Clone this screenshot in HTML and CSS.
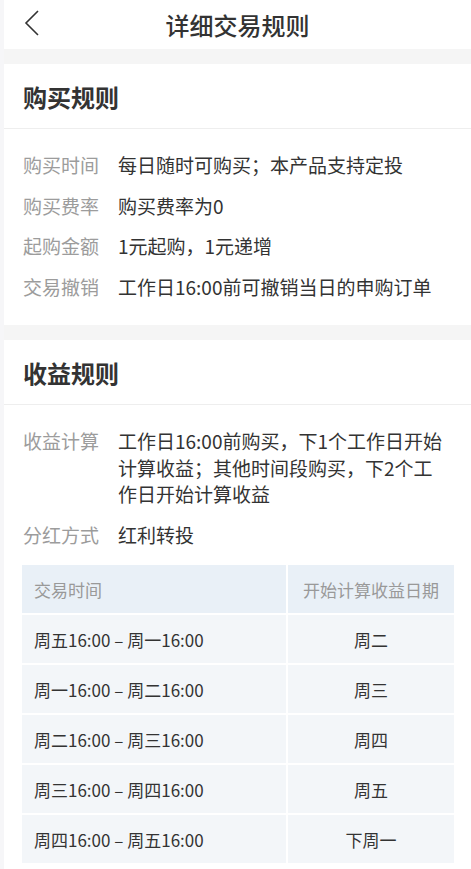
FILE: index.html
```html
<!DOCTYPE html>
<html lang="zh-CN">
<head>
<meta charset="UTF-8">
<meta name="viewport" content="width=device-width, initial-scale=1.0">
<title>详细交易规则</title>
<link rel="stylesheet" href="styles.css">
</head>
<body>
    <div class="page">
        <div class="top-bar">
            <svg class="back" width="16" height="26" viewBox="0 0 16 26">
                <path d="M14 1 L2 13 L14 25" fill="none" stroke="#333" stroke-width="1.6"/>
            </svg>
            <div class="title">详细交易规则</div>
        </div>

        <div class="band"></div>

        <div class="section">
            <div class="section-head">购买规则</div>
            <div class="section-body">
                <div class="rule-row">
                    <div class="label">购买时间</div>
                    <div class="value">每日随时可购买；本产品支持定投</div>
                </div>
                <div class="rule-row">
                    <div class="label">购买费率</div>
                    <div class="value">购买费率为0</div>
                </div>
                <div class="rule-row">
                    <div class="label">起购金额</div>
                    <div class="value">1元起购，1元递增</div>
                </div>
                <div class="rule-row">
                    <div class="label">交易撤销</div>
                    <div class="value">工作日16:00前可撤销当日的申购订单</div>
                </div>
            </div>
        </div>

        <div class="band"></div>

        <div class="section">
            <div class="section-head">收益规则</div>
            <div class="section-body">
                <div class="rule-row">
                    <div class="label">收益计算</div>
                    <div class="value">工作日16:00前购买，下1个工作日开始计算收益；其他时间段购买，下2个工作日开始计算收益</div>
                </div>
                <div class="rule-row">
                    <div class="label">分红方式</div>
                    <div class="value">红利转投</div>
                </div>

                <div class="income-table">
                    <div class="cell head">交易时间</div>
                    <div class="cell head center">开始计算收益日期</div>
                    <div class="cell">周五16:00 – 周一16:00</div>
                    <div class="cell center">周二</div>
                    <div class="cell">周一16:00 – 周二16:00</div>
                    <div class="cell center">周三</div>
                    <div class="cell">周二16:00 – 周三16:00</div>
                    <div class="cell center">周四</div>
                    <div class="cell">周三16:00 – 周四16:00</div>
                    <div class="cell center">周五</div>
                    <div class="cell">周四16:00 – 周五16:00</div>
                    <div class="cell center">下周一</div>
                </div>
            </div>
        </div>
    </div>
</body>
</html>
```

FILE: styles.css
```css
body {
  margin: 0;
  background-color: #f6f6f8;
  font-family: "Noto Sans CJK SC", "Noto Sans", sans-serif;
  color: #333333;
}
.page {
  margin-left: 4px;
  background-color: #ffffff;
  min-height: 869px;
}
.top-bar {
  height: 49px;
  display: flex;
  align-items: center;
  justify-content: center;
  position: relative;
}
.back {
  position: absolute;
  left: 20px;
  top: 10px;
}
.title {
  font-size: 24px;
  font-weight: 500;
  color: #333333;
}
.band {
  height: 15px;
  background-color: #f5f5f5;
}
.section-head {
  height: 64px;
  display: flex;
  align-items: center;
  padding-left: 19px;
  font-size: 24px;
  font-weight: bold;
  color: #333333;
  border-bottom: 1px solid #eeeeee;
}
.section-body {
  padding: 16px 17px 18px 19px;
}
.rule-row {
  display: flex;
  padding: 7px 0;
  font-size: 19px;
  line-height: 26.5px;
}
.label {
  width: 95px;
  flex-shrink: 0;
  color: #9c9c9c;
}
.value {
  width: 328px;
  color: #333333;
}
.income-table {
  display: grid;
  grid-template-columns: 264px 166px;
  gap: 2px;
  margin: 10px 0 0 -1px;
}
.cell {
  height: 48px;
  display: flex;
  align-items: center;
  padding-left: 12px;
  background-color: #f3f6f9;
  font-size: 17px;
  color: #333333;
}
.cell.head {
  background-color: #e9f0f7;
  color: #999999;
}
.cell.center {
  justify-content: center;
  padding-left: 0;
}
```
